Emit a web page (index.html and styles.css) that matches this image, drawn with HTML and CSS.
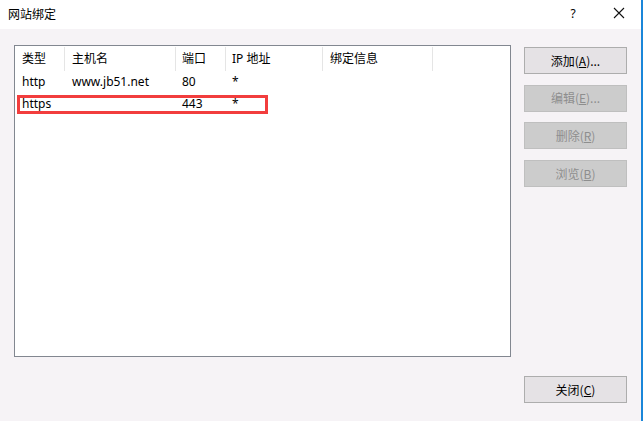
FILE: index.html
```html
<!DOCTYPE html>
<html lang="zh-CN">
<head>
<meta charset="utf-8">
<title>网站绑定</title>
<link rel="stylesheet" href="styles.css">
</head>
<body>
<div class="window">
  <div class="titlebar">
    <span class="title">网站绑定</span>
    <span class="help">?</span>
    <span class="close">
      <svg width="12" height="12" viewBox="0 0 12 12"><path d="M1 1 L11 11 M11 1 L1 11" stroke="#111" stroke-width="1.1" fill="none"/></svg>
    </span>
  </div>
  <div class="content">
    <div class="listbox">
      <div class="row header">
        <div class="cell c1">类型</div>
        <div class="cell c2">主机名</div>
        <div class="cell c3">端口</div>
        <div class="cell c4">IP 地址</div>
        <div class="cell c5">绑定信息</div>
      </div>
      <div class="row">
        <div class="cell c1">http</div>
        <div class="cell c2">www.jb51.net</div>
        <div class="cell c3">80</div>
        <div class="cell c4">*</div>
        <div class="cell c5"></div>
      </div>
      <div class="row marked">
        <div class="cell c1">https</div>
        <div class="cell c2"></div>
        <div class="cell c3">443</div>
        <div class="cell c4">*</div>
        <div class="cell c5"></div>
        <div class="redbox"></div>
      </div>
    </div>
    <div class="side">
      <div class="btngroup">
        <div class="btn">添加(<u>A</u>)...</div>
        <div class="btn disabled">编辑(<u>E</u>)...</div>
        <div class="btn disabled">删除(<u>R</u>)</div>
        <div class="btn disabled">浏览(<u>B</u>)</div>
      </div>
      <div class="btn">关闭(<u>C</u>)</div>
    </div>
  </div>
</div>
</body>
</html>
```

FILE: styles.css
```css
html, body {
  margin: 0;
  padding: 0;
}
body {
  width: 643px;
  height: 421px;
  overflow: hidden;
  font-family: "Noto Sans", "Noto Sans CJK SC", sans-serif;
  font-size: 12px;
  color: #000;
  background: #f6f3f6;
}
.window {
  width: 641px;
  height: 421px;
  border-right: 2px solid #1a86d9;
  display: flex;
  flex-direction: column;
}
.titlebar {
  height: 29px;
  background: #ffffff;
  display: flex;
  align-items: center;
  position: relative;
}
.title {
  margin-left: 8px;
  font-family: "Noto Sans CJK SC", sans-serif;
  font-size: 12px;
  line-height: 16px;
  margin-top: -2px;
}
.help {
  margin-left: auto;
  width: 12px;
  text-align: center;
  font-size: 12px;
  margin-right: 34px;
  margin-top: -2px;
}
.close {
  width: 12px;
  height: 12px;
  margin-right: 16px;
  margin-top: -3px;
  display: flex;
}
.content {
  flex: 1;
  display: flex;
  padding: 16px 0 0 14px;
}
.listbox {
  width: 495px;
  height: 310px;
  border: 1px solid #828790;
  background: #ffffff;
}
.row {
  display: flex;
  height: 22px;
  align-items: center;
  position: relative;
}
.row.header {
  height: 24px;
  align-items: stretch;
  padding-top: 1px;
}
.cell {
  box-sizing: border-box;
  padding-left: 7px;
  white-space: nowrap;
  line-height: 16px;
}
.header .cell {
  border-right: 1px solid #e5e5e5;
  display: flex;
  align-items: center;
  padding-bottom: 1px;
}
.c1 { width: 50px; }
.c2 { width: 111px; }
.c3 { width: 50px; padding-left: 6px; }
.c4 { width: 97px; padding-left: 6px; }
.c5 { width: 110px; }
.redbox {
  position: absolute;
  left: 2px;
  top: 2px;
  width: 251px;
  height: 19px;
  box-sizing: border-box;
  border: 3px solid #f23d3d;
}
.side {
  margin-left: 13px;
  margin-top: 2px;
  display: flex;
  flex-direction: column;
  justify-content: space-between;
  height: 356px;
}
.btngroup {
  display: flex;
  flex-direction: column;
  gap: 10.7px;
}
.btn {
  width: 103px;
  height: 27px;
  box-sizing: border-box;
  border: 1px solid #adadad;
  background: #e5e2e5;
  display: flex;
  align-items: center;
  justify-content: center;
  font-family: "Noto Sans CJK SC", sans-serif;
  font-size: 12px;
  padding-bottom: 1px;
}
.btn u {
  text-underline-offset: 1px;
}
.btn.disabled {
  background: #cccccc;
  border-color: #bfbfbf;
  color: #8e8e8e;
}
```
